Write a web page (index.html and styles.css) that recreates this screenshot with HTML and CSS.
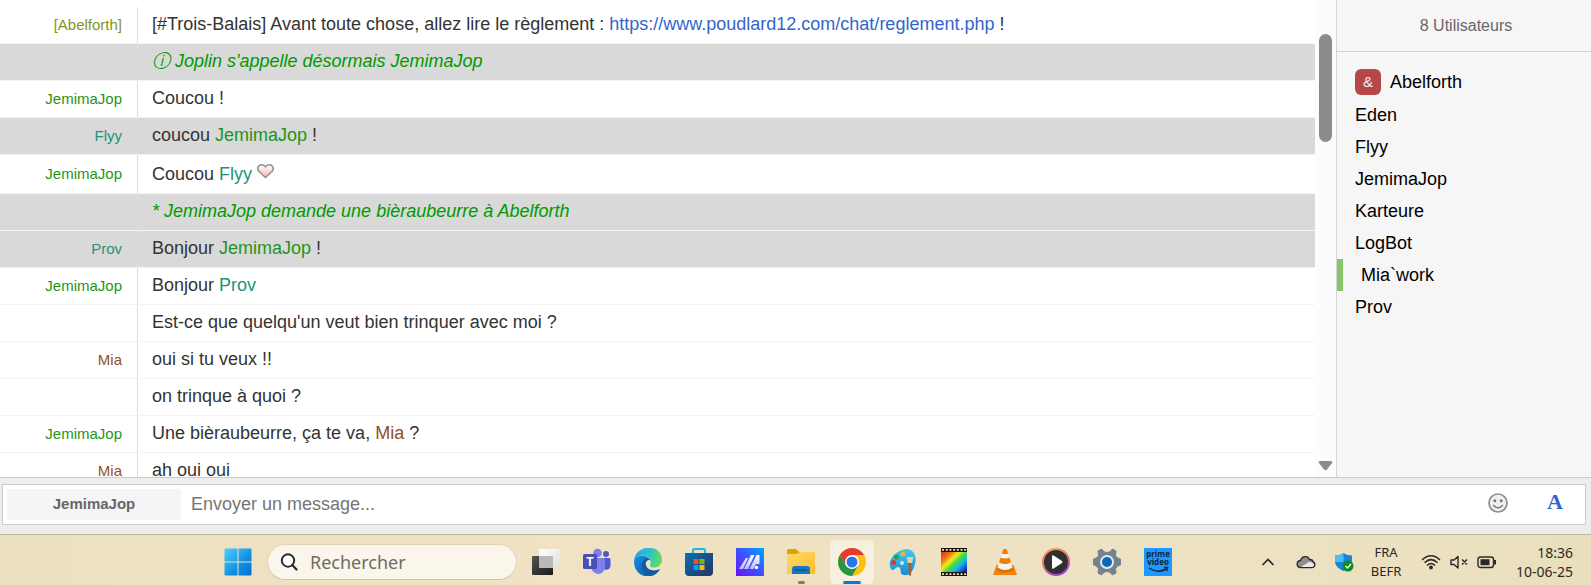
FILE: index.html
```html
<!DOCTYPE html>
<html lang="fr">
<head>
<meta charset="utf-8">
<title>Trois-Balais</title>
<link rel="stylesheet" href="styles.css">
</head>
<body>
<main class="chat">
  <section class="messages">
    <ul class="log">
      <li class="row"><span class="nick c-olive">[Abelforth]</span><span class="text">[#Trois-Balais] Avant toute chose, allez lire le règlement : <a class="link" href="https://www.poudlard12.com/chat/reglement.php">https://www.poudlard12.com/chat/reglement.php</a> !</span></li>
      <li class="row alt"><span class="nick"></span><span class="text action">ⓘ Joplin s'appelle désormais JemimaJop</span></li>
      <li class="row"><span class="nick c-green">JemimaJop</span><span class="text">Coucou !</span></li>
      <li class="row alt"><span class="nick c-teal">Flyy</span><span class="text">coucou <span class="c-green">JemimaJop</span> !</span></li>
      <li class="row tall"><span class="nick c-green">JemimaJop</span><span class="text">Coucou <span class="c-teal">Flyy</span> <svg class="heart" viewBox="0 0 17 17"><defs><linearGradient id="hg" x1="0" y1="0" x2="0" y2="1"><stop offset="0" stop-color="#fff"/><stop offset="1" stop-color="#f0b4b4"/></linearGradient></defs><path d="M8.500 14.500L2 8.500C-1 5 2 1.500 5 1.700Q7.500 2 8.500 4Q9.500 2 12 1.700C15 1.500 18 5 15 8.500Z" fill="url(#hg)" stroke="#999092" stroke-width="1.600" stroke-linejoin="round"/></svg></span></li>
      <li class="row alt"><span class="nick"></span><span class="text action">* JemimaJop demande une bièraubeurre à Abelforth</span></li>
      <li class="row alt"><span class="nick c-teal">Prov</span><span class="text">Bonjour <span class="c-green">JemimaJop</span> !</span></li>
      <li class="row"><span class="nick c-green">JemimaJop</span><span class="text">Bonjour <span class="c-teal">Prov</span></span></li>
      <li class="row"><span class="nick"></span><span class="text">Est-ce que quelqu'un veut bien trinquer avec moi ?</span></li>
      <li class="row"><span class="nick c-brown">Mia</span><span class="text">oui si tu veux !!</span></li>
      <li class="row"><span class="nick"></span><span class="text">on trinque à quoi ?</span></li>
      <li class="row"><span class="nick c-green">JemimaJop</span><span class="text">Une bièraubeurre, ça te va, <span class="c-brown">Mia</span> ?</span></li>
      <li class="row"><span class="nick c-brown">Mia</span><span class="text">ah oui oui</span></li>
    </ul>
    <div class="scroll"><div class="thumb"></div><svg class="arrow" viewBox="0 0 15 11"><path d="M2 1H13Q15 1 14 3L9 9.500Q7.500 11 6 9.500L1 3Q0 1 2 1Z" fill="#8b8b8b"/></svg></div>
  </section>
  <aside class="users">
    <h2 class="count">8 Utilisateurs</h2>
    <ul class="names">
      <li class="user"><span class="badge">&amp;</span>Abelforth</li>
      <li class="user">Eden</li>
      <li class="user">Flyy</li>
      <li class="user">JemimaJop</li>
      <li class="user">Karteure</li>
      <li class="user">LogBot</li>
      <li class="user active">Mia`work</li>
      <li class="user">Prov</li>
    </ul>
  </aside>
</main>
<form class="composer">
  <div class="box">
    <label class="me" for="msg">JemimaJop</label>
    <input class="field" id="msg" type="text" placeholder="Envoyer un message...">
    <button class="tool" type="button" aria-label="Émoticônes"><svg class="smile" viewBox="0 0 20 20"><circle cx="10" cy="10" r="9" fill="#f0f0f0" stroke="#8d8d8d" stroke-width="1.700"/><circle cx="6.800" cy="7.800" r="1.500" fill="#777"/><circle cx="13.200" cy="7.800" r="1.500" fill="#777"/><path d="M5 12Q10 17.500 15 12" fill="none" stroke="#777" stroke-width="1.300"/></svg></button>
    <button class="tool format" type="button">A</button>
  </div>
</form>
<footer class="taskbar">
  <nav class="apps">
    <button class="app" aria-label="Démarrer"><svg class="icon" viewBox="0 0 28 28"><defs><linearGradient id="win" gradientUnits="userSpaceOnUse" x1="0" y1="0" x2="28" y2="28"><stop offset="0" stop-color="#4fd4ff"/><stop offset=".6" stop-color="#0f8fe3"/><stop offset="1" stop-color="#0670cb"/></linearGradient></defs><path d="M.500 1.500Q.500 .500 1.500 .500H13.500V13.500H.500ZM14.500 .500H26.500Q27.500 .500 27.500 1.500V13.500H14.500ZM.500 14.500H13.500V27.500H1.500Q.500 27.500 .500 26.500ZM14.500 14.500H27.500V26.500Q27.500 27.500 26.500 27.500H14.500Z" fill="url(#win)"/></svg></button>
    <label class="search"><svg class="lens" viewBox="0 0 18 18"><circle cx="8" cy="7.500" r="6.200" fill="#fff" stroke="#2c2c2c" stroke-width="2"/><path d="M12.300 12L16.500 16.500" stroke="#2c2c2c" stroke-width="2.300" stroke-linecap="round"/></svg><input class="query" type="text" placeholder="Rechercher" aria-label="Rechercher"></label>
    <button class="app" aria-label="Vue des tâches"><svg class="icon" viewBox="0 0 28 28"><defs><linearGradient id="tv" x1="0" y1="0" x2="1" y2="1"><stop offset="0" stop-color="#555"/><stop offset="1" stop-color="#191919"/></linearGradient><linearGradient id="tw" x1="0" y1="0" x2="1" y2="1"><stop offset="0" stop-color="#fff"/><stop offset="1" stop-color="#dedede"/></linearGradient></defs><rect x="0" y="8" width="21" height="19" rx="1" fill="url(#tv)"/><rect x="7" y="1" width="21" height="19" rx="1" fill="url(#tw)"/><path d="M7 8H21V20H7Z" fill="#b9b9b9"/></svg></button>
    <button class="app" aria-label="Teams"><svg class="icon" viewBox="0 0 28 28"><circle cx="23" cy="6" r="3" fill="#5059c9"/><circle cx="14.500" cy="5" r="4.300" fill="#7b83eb"/><path d="M18 10H26Q27.500 10 27.500 11.500V17C27.500 23 20 23 18 19Z" fill="#5059c9"/><path d="M8 10H20Q22 10 22 12V18C22 29 8 28 8 18Z" fill="#7b83eb"/><rect x="0" y="6" width="14" height="15" rx="1.500" fill="#484fb5"/><text x="7" y="18" text-anchor="middle" class="teams-t">T</text></svg></button>
    <button class="app" aria-label="Edge"><svg class="icon" viewBox="0 0 28 28"><defs><linearGradient id="e1" x1="0" y1=".3" x2="1" y2=".5"><stop offset="0" stop-color="#24a8e5"/><stop offset=".55" stop-color="#2fc3c9"/><stop offset="1" stop-color="#67df52"/></linearGradient><linearGradient id="e2" x1="0" y1="0" x2="1" y2="1"><stop offset="0" stop-color="#198edb"/><stop offset="1" stop-color="#0b4f9e"/></linearGradient></defs><path d="M0 13C1-4 28-5 28 12C28 19 20 21 16.500 18.500C15 17 18 16 16 12C13 6 4 6 0 13Z" fill="url(#e1)"/><path d="M0 14C1 6 13 6 16 12C12 10 8 14 10 19C13 25 21 24 26 21C21 29 12 30 6 26C2 23 0 19 0 14Z" fill="url(#e2)"/><path d="M10 12C5 18 9 26 16 28C20 28 24 25 26 21C20 24 13 22 12 17C11 14 13 12 16 12C14 10 11 10 10 12Z" fill="#1259a6"/></svg></button>
    <button class="app" aria-label="Microsoft Store"><svg class="icon" viewBox="0 0 28 28"><defs><linearGradient id="st" x1="0" y1="0" x2="1" y2="1"><stop offset="0" stop-color="#0871b8"/><stop offset="1" stop-color="#263264"/></linearGradient></defs><path d="M8 6V2.500Q8 1 9.500 1H18.500Q20 1 20 2.500V6" fill="none" stroke="#20b4ef" stroke-width="2"/><path d="M0 5H28V24Q28 28 24 28H4Q0 28 0 24Z" fill="url(#st)"/><path d="M8.500 11H13.500V16H8.500Z" fill="#f25022"/><path d="M14.500 11H19.500V16H14.500Z" fill="#7fba00"/><path d="M8.500 17H13.500V22H8.500Z" fill="#00a4ef"/><path d="M14.500 17H19.500V22H14.500Z" fill="#ffb900"/></svg></button>
    <button class="app" aria-label="MyASUS"><svg class="icon" viewBox="0 0 28 28"><defs><linearGradient id="as" x1="0" y1="1" x2="1" y2="0"><stop offset="0" stop-color="#6a12f5"/><stop offset=".5" stop-color="#3d51ff"/><stop offset="1" stop-color="#00a6ff"/></linearGradient><linearGradient id="at" x1="0" y1="0" x2="0" y2="1"><stop offset="0" stop-color="#fff"/><stop offset="1" stop-color="#b9bdff"/></linearGradient></defs><path d="M0 0H28V28H0Z" fill="url(#as)"/><path d="M3 21L10 10H12L7 21ZM8 21L15 7H18.500L12 21ZM13.500 21L20.500 7H23.500V16H20L17.500 21Z" fill="url(#at)"/><circle cx="20.500" cy="19.500" r="1.700" fill="#fff"/></svg></button>
    <button class="app" aria-label="Explorateur de fichiers"><svg class="icon" viewBox="0 0 28 28"><defs><linearGradient id="fo" x1="0" y1="0" x2="1" y2="1"><stop offset="0" stop-color="#ffd968"/><stop offset="1" stop-color="#fdbd2c"/></linearGradient></defs><path d="M0 3Q0 1 2 1H9L12 4H27Q28 4 28 6V26H0Z" fill="#e0a106"/><path d="M0 6H10L13 4H28V25Q28 26 27 26H1Q0 26 0 25Z" fill="url(#fo)"/><path d="M5 26V21Q5 18 8 18H20Q23 18 23 21V26Z" fill="#1477c9"/><path d="M8 22H20" stroke="#07477f" stroke-width="1.300"/></svg><span class="mark"></span></button>
    <button class="app current" aria-label="Chrome"><svg class="icon" viewBox="0 0 28 28"><circle cx="14" cy="14" r="14" fill="#fbc116"/><path d="M1.900 7A14 14 0 0 1 26.100 7H14L7.900 17.500Z" fill="#e33b2e"/><path d="M1.900 7A14 14 0 0 0 14 28L20.100 17.500L14 20L7.900 17.500Z" fill="#269447"/><circle cx="14" cy="14" r="7" fill="#fff"/><circle cx="14" cy="14" r="5.500" fill="#2878e8"/></svg><span class="mark"></span></button>
    <button class="app" aria-label="Paint"><svg class="icon" viewBox="0 0 28 28"><defs><linearGradient id="pa" x1="0" y1="0" x2="0" y2="1"><stop offset="0" stop-color="#44c8f4"/><stop offset="1" stop-color="#168bd6"/></linearGradient></defs><path d="M13 2C22-2 29 6 26 16C24 24 20 28 15 27C9 26 14 20 9 19C6 19 5 24 2 21C-2 14 4 5 13 2Z" fill="url(#pa)"/><circle cx="4.500" cy="14.500" r="2.500" fill="#d2402d"/><circle cx="7.500" cy="9" r="2.500" fill="#25a34b"/><circle cx="14" cy="6" r="2.500" fill="#f5b52b"/><circle cx="13" cy="15" r="1.900" fill="#eee3c6"/><path d="M17.500 9H24.500L23 15H19Z" fill="#e6cfab"/><path d="M19.300 15H22.700L22 27Q21 29 20 27Z" fill="#a75f2c"/></svg></button>
    <button class="app" aria-label="Studio photo"><svg class="icon" viewBox="0 0 28 28"><defs><linearGradient id="ra" x1="0" y1=".1" x2="1" y2=".9"><stop offset="0" stop-color="#e83617"/><stop offset=".22" stop-color="#f47b15"/><stop offset=".38" stop-color="#f2ec1a"/><stop offset=".55" stop-color="#47db3e"/><stop offset=".72" stop-color="#16b8e8"/><stop offset="1" stop-color="#0b20bd"/></linearGradient></defs><path d="M1 0H27V28H1Z" fill="#17130d"/><path d="M1 4H27V24H1Z" fill="url(#ra)"/><path d="M2 1.800H27M2 26.200H27" stroke="#efe3c5" stroke-width="1.800" stroke-dasharray="2 1.700"/></svg></button>
    <button class="app" aria-label="VLC"><svg class="icon" viewBox="0 0 28 28"><path d="M5.500 17H22.500L26 27H2Z" fill="#f28511"/><path d="M12 2Q14-.5 16 2L21.500 20Q14 25 6.500 20Z" fill="#f5f3ee"/><path d="M12 2Q14-.5 16 2L17.200 5.500Q14 7 10.800 5.500ZM9.600 9.500Q14 11.500 18.400 9.500L20 14.500Q14 17.500 8 14.500Z" fill="#f07d09"/><path d="M6.500 19.500Q14 24.500 21.500 19.500L23 22Q14 27.500 5 22Z" fill="#e06f06"/></svg></button>
    <button class="app" aria-label="Lecteur multimédia"><svg class="icon" viewBox="0 0 28 28"><defs><linearGradient id="me" x1="0" y1="0" x2=".4" y2="1"><stop offset="0" stop-color="#ffa04a"/><stop offset=".5" stop-color="#e87666"/><stop offset="1" stop-color="#a246d2"/></linearGradient></defs><circle cx="14" cy="14" r="14" fill="url(#me)"/><circle cx="14" cy="14" r="12" fill="#303030"/><path d="M10 8.500Q10 6.500 12 7.800L20 13Q21 14 20 15L12 20.200Q10 21.500 10 19.500Z" fill="#fff"/></svg></button>
    <button class="app" aria-label="Paramètres"><svg class="icon" viewBox="0 0 28 28"><path d="M8.500 1L11.500 4Q14 5 16.500 4L19.500 1L23 3L22.500 7.500Q23.500 10 28 11.500V16.500Q23.500 18 22.500 20.500L23 25L19.500 27L16.500 24Q14 23 11.500 24L8.500 27L5 25L5.500 20.500Q4.500 18 0 16.500V11.500Q4.500 10 5.500 7.500L5 3Z" fill="#75818c" stroke="#75818c" stroke-linejoin="round"/><circle cx="14" cy="14" r="7" fill="#e5e9ed"/><circle cx="14" cy="14" r="5" fill="#0868bd"/></svg></button>
    <button class="app" aria-label="Prime Video"><svg class="icon" viewBox="0 0 28 28"><path d="M0 0H28V28H0Z" fill="#1c98ff"/><text x="14" y="9" text-anchor="middle" class="prime">prime</text><text x="14" y="17" text-anchor="middle" class="prime">video</text><path d="M5 20Q14 26 22 21M20 19.500L23.500 19.500L22.500 23" fill="none" stroke="#10243d" stroke-width="1.500"/></svg></button>
  </nav>
  <div class="tray">
    <button class="sys" aria-label="Icônes masquées"><svg class="glyph" viewBox="0 0 20 20"><path d="M4.500 13L10 7.500L15.500 13" fill="none" stroke="#2a2925" stroke-width="1.600"/></svg></button>
    <button class="sys" aria-label="OneDrive"><svg class="glyph" viewBox="0 0 20 20"><path d="M5 15.500C0 15.500 0 9 4.500 8.500C6 3.500 12 3.500 13.500 7.500C16 7.500 17 9 17 10C20 11 19 15.500 16 15.500Z" fill="#8f8f8f" stroke="#2a2925" stroke-width="1.400"/><path d="M5 15L12 10.500C14 9.500 18 10.500 18 13Q18 15 16 15Z" fill="#e9e9e9"/></svg></button>
    <button class="sys" aria-label="Sécurité Windows"><svg class="glyph" viewBox="0 0 20 20"><path d="M9.500 1Q13 3.500 18 3.500V9C18 14 14 17 9.500 19C5 17 1 14 1 9V3.500Q6 3.500 9.500 1Z" fill="#1686d9"/><path d="M9.500 1V10H1V3.500Q6 3.500 9.500 1Z" fill="#48bff3"/><circle cx="14" cy="14" r="5.500" fill="#128a20"/><path d="M11.500 14L13.500 16L17 12" fill="none" stroke="#fff" stroke-width="1.300"/></svg></button>
    <div class="stack lang"><span>FRA</span><span>BEFR</span></div>
    <button class="status" aria-label="Réseau, son et batterie"><svg class="glyph" viewBox="0 0 20 20"><path d="M1 8Q10-.5 19 8M3.500 10.800Q10 4.500 16.500 10.800M6 13.500Q10 9.500 14 13.500" fill="none" stroke="#2a2925" stroke-width="1.500"/><circle cx="10" cy="15.500" r="1.900" fill="#2a2925"/></svg><svg class="glyph" viewBox="0 0 20 20"><path d="M2 8H5L9 4.500V16L5 12.500H2ZM13 7.500L18 12.500M18 7.500L13 12.500" fill="none" stroke="#2a2925" stroke-width="1.400" stroke-linejoin="round"/></svg><svg class="glyph" viewBox="0 0 20 20"><rect x="1" y="5" width="15.500" height="10.500" rx="2.500" fill="none" stroke="#2a2925" stroke-width="1.400"/><rect x="3.500" y="7.200" width="9" height="6" fill="#2a2925"/><path d="M18 8V12.500" stroke="#2a2925" stroke-width="2"/></svg></button>
    <time class="stack clock"><span>18:36</span><span>10-06-25</span></time>
  </div>
</footer>
</body>
</html>
```
FILE: styles.css
```css
* { box-sizing: border-box; }
body { margin: 0; height: 100vh; display: flex; flex-direction: column; overflow: hidden; font-family: Arial, "Liberation Sans", sans-serif; font-size: 18px; color: #333; background: #fff; }
ul { list-style: none; margin: 0; padding: 0; }
button { border: 0; padding: 0; background: none; font: inherit; }
input { border: 0; padding: 0; outline: 0; background: none; }
.c-olive { color: #84951c; }
.c-green { color: #1f951c; }
.c-teal { color: #1c9579; }
.c-brown { color: #954f1c; }

.chat { flex: 1; min-height: 0; display: flex; }
.messages { flex: 1; min-width: 0; display: flex; overflow: hidden; }
.log { flex: 1; padding-top: 7px; }
.row { display: flex; height: 37px; line-height: 34px; border-bottom: 1px solid #f4f4f4; }
.row.tall { height: 39px; line-height: 38px; }
.alt { background: #d9d9d9; }
.nick { flex: none; width: 138px; padding-right: 15px; border-right: 1px solid #ddd; text-align: right; font-size: 15px; line-height: 35px; }
.tall .nick { line-height: 37px; }
.text { padding-left: 14px; white-space: nowrap; }
.action { font-style: italic; color: #090; }
.link { color: #36c; text-decoration: none; }
.heart { width: 17px; height: 17px; }
.scroll { flex: none; width: 21px; padding: 34px 4px 6px; display: flex; flex-direction: column; align-items: center; justify-content: space-between; background: #fcfcfc; }
.thumb { width: 13px; height: 108px; border-radius: 7px; background: #8b8b8b; }
.arrow { width: 15px; height: 11px; }

.users { flex: none; width: 255px; border-left: 1px solid #d5d5d5; background: #f6f6f6; color: #000; }
.count { margin: 0; padding-left: 4px; height: 52px; line-height: 51px; border-bottom: 1px solid #d5d5d5; text-align: center; font-size: 16px; font-weight: 400; color: #666; }
.names { padding-top: 12px; }
.user { height: 32px; line-height: 32px; padding-left: 18px; display: flex; align-items: center; }
.user:first-child { height: 35px; }
.active { border-left: 6px solid #89c56c; }
.badge { width: 26px; height: 26px; margin-right: 9px; border-radius: 6px; background: #b54747; color: #f6eaea; font-size: 15px; line-height: 26px; text-align: center; }

.composer { flex: none; padding: 6px 5px 9px 2px; border-top: 1px solid #ccc; background: #ededed; }
.box { display: flex; align-items: center; height: 41px; padding: 0 16px 0 4px; border: 1px solid #ccc; background: #fff; }
.me { width: 174px; height: 31px; background: #f5f5f5; color: #666; font-size: 15px; font-weight: 700; line-height: 30px; text-align: center; }
.field { flex: 1; min-width: 0; margin-left: 10px; font: 18px Arial, "Liberation Sans", sans-serif; }
.field::placeholder { color: #757575; opacity: 1; }
.tool { width: 28px; height: 28px; margin-left: 29px; display: flex; align-items: flex-start; justify-content: center; padding-top: 2px; }
.smile { width: 20px; height: 20px; }
.format { padding-top: 0; font: 700 22px/22px "Liberation Serif", serif; color: #36c; }

.taskbar { flex: none; height: 51px; display: flex; justify-content: space-between; border-top: 1px solid #bdb79f; background: linear-gradient(90deg, #ebe1c1, #f0e2c2 35%, #ede2c4 70%, #eadfbd); font-family: "Noto Sans", sans-serif; }
.apps { display: flex; align-items: center; gap: 7px; padding: 5px 0 1px 216px; }
.app { position: relative; width: 44px; height: 44px; display: flex; align-items: center; justify-content: center; border-radius: 5px; }
.current { background: #f7f0e1; }
.icon { width: 28px; height: 28px; }
.mark { position: absolute; bottom: 0; left: 19px; width: 7px; height: 3px; border-radius: 2px; background: #857b6c; }
.current .mark { left: 13px; width: 18px; background: #0a78d6; }
.search { width: 250px; height: 36px; padding-left: 12px; display: flex; align-items: center; gap: 12px; border: 1px solid #dfd3b6; border-bottom-color: #cfc5aa; border-radius: 18px; background: #faf6ec; }
.lens { width: 18px; height: 18px; }
.query { flex: 1; min-width: 0; font: 18px "Noto Sans", sans-serif; }
.query::placeholder { color: #6f6b63; opacity: 1; }
.teams-t { font: 700 12px "Liberation Sans", sans-serif; fill: #fff; }
.prime { font: 700 8px "Open Sans", sans-serif; fill: #10243d; }
.tray { display: flex; align-items: center; padding: 3px 18px 0 0; color: #2a2925; font-size: 14px; line-height: 19px; }
.sys { width: 38px; display: flex; justify-content: center; }
.glyph { width: 20px; height: 20px; }
.stack { display: flex; flex-direction: column; }
.lang { width: 46px; align-items: center; font-size: 13px; }
.status { display: flex; gap: 8px; padding-left: 12px; }
.clock { width: 76px; align-items: flex-end; }
```
